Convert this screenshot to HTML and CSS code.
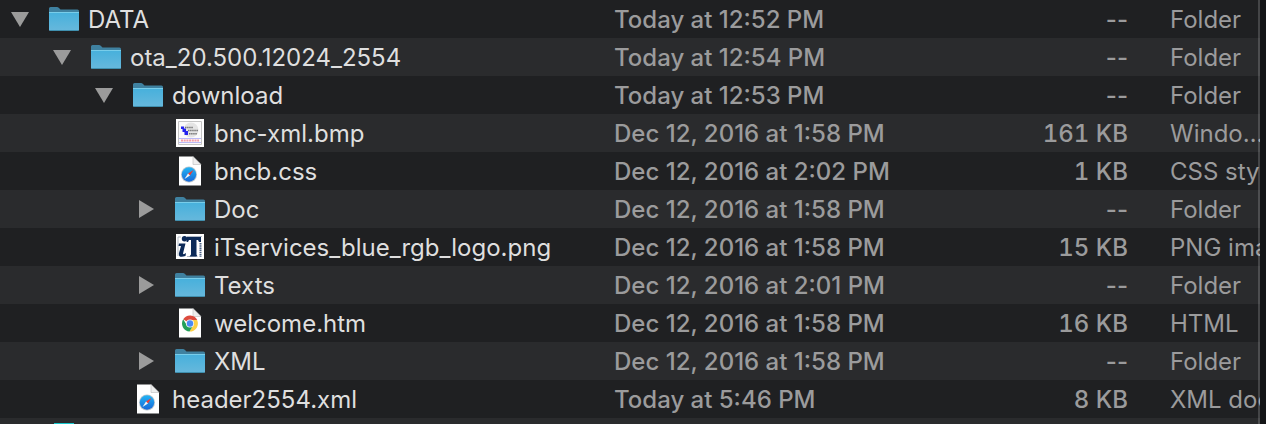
FILE: index.html
```
<!DOCTYPE html>
<html lang="en">
<head>
<meta charset="utf-8">
<title>Files</title>
<link rel="stylesheet" href="styles.css">
<script src="files.js" defer></script>
</head>
<body>
<svg class="defs" aria-hidden="true">
  <defs>
    <linearGradient id="blue" x1="0" y1="0" x2="0" y2="1"><stop offset="0" stop-color="#46b0dc"/><stop offset="1" stop-color="#67b8dc"/></linearGradient>
    <linearGradient id="compass" x1="0" y1="0" x2="0" y2="1"><stop offset="0" stop-color="#22b4f4"/><stop offset="1" stop-color="#1768d8"/></linearGradient>
    <symbol id="folder" viewBox="0 0 32 32">
      <path d="M1 12V5.500Q1 4 2.500 4H9Q10 4 11 5L12.500 6.500H29.500Q31 6.500 31 8V13H1Z" fill="#3f81a0"/>
      <path d="M1 9H31V26.500Q31 28 29.500 28H2.500Q1 28 1 26.500Z" fill="url(#blue)"/>
      <path d="M1 9.500H31" stroke="#78cdea"/>
      <path d="M2 27.500H30" stroke="#3f8fae"/>
    </symbol>
    <symbol id="page" viewBox="0 0 32 32">
      <path d="M5 1.500H19L27 9.500V30.500H5Z" fill="#fff"/>
      <path d="M19 1.500V9.500H27Z" fill="#eee" stroke="#bbb" stroke-width=".6"/>
    </symbol>
    <symbol id="safari" viewBox="0 0 32 32">
      <use href="#page"/>
      <circle cx="15" cy="19.500" r="8" fill="#b9c3cc"/>
      <circle cx="15" cy="19.500" r="7.200" fill="url(#compass)"/>
      <path d="M19.500 15L16 20.500 14 18.500Z" fill="#f33a30"/>
      <path d="M10.500 24L14 18.500 16 20.500Z" fill="#f4f4f4"/>
    </symbol>
    <symbol id="chrome" viewBox="0 0 32 32">
      <use href="#page"/>
      <path d="M16 16.500L9.200 12.300A8 8 0 0 1 23.300 13H16Z" fill="#dd4b3e"/>
      <path d="M16 13H23.100A8 8 0 0 1 15.500 24.500L19 18Z" fill="#fdd045"/>
      <path d="M9.200 12.300L13 18.500 18.500 19.500 15.500 24.500A8 8 0 0 1 9.200 12.300Z" fill="#23a05a"/>
      <circle cx="16" cy="16.500" r="4" fill="#f5f5f5"/>
      <circle cx="16" cy="16.500" r="3.200" fill="#4a8af4"/>
    </symbol>
    <symbol id="bnc" viewBox="0 0 32 32">
      <path d="M2 2H30V30H2Z" fill="#fff"/>
      <path d="M4.500 4.500H27.500V27.500H4.500Z" fill="#fafafa" stroke="#c4c4c4"/>
      <circle cx="17" cy="13" r="7.500" fill="#e4e4e4"/>
      <path d="M7 9.500H10V11.500H12V14H14V18H10.500V15H8.500V12H7Z" fill="#2424ee"/>
      <path d="M11 10.500H19M14 13.500H24M15 16.800H23" stroke="#777" stroke-width="1.500" stroke-dasharray="1.500 .6"/>
      <path d="M5 21.500H27M5 25.500H27" stroke="#a8a8f4" stroke-width=".8"/>
      <path d="M7 23.500H25" stroke="#f39aa8" stroke-width="2" stroke-dasharray="2 .7"/>
    </symbol>
    <symbol id="it" viewBox="0 0 32 32">
      <path d="M2 3H30V28H2Z" fill="#fff"/>
      <path d="M4 25V6H7M13 5.500H28M13 25.500H22" fill="none" stroke="#b3bbc6"/>
      <circle cx="10.500" cy="7.700" r="2.700" fill="#0c2a58"/>
      <path d="M5 12.500H11.500L9 22.500Q9.500 24 12 22L11.500 25Q4 27.500 5 22L7 15H4.500Z" fill="#0c2a58"/>
      <path d="M13 6H27V11H25L24 9H22.500V23.500L23.500 25.500H15.500L17 23.500V9H15L14 11H12.500Z" fill="#0c2a58"/>
      <path d="M26.500 12V26" stroke="#4a6286" stroke-width="2" stroke-dasharray="1.500 .7"/>
    </symbol>
  </defs>
</svg>
<main class="finder">
  <table class="files">
    <colgroup><col class="col-name"><col class="col-date"><col class="col-size"><col class="col-kind"></colgroup>
    <tbody id="rows"></tbody>
  </table>
  <div class="next-row"><span class="next-icon"></span></div>
</main>
</body>
</html>
```
FILE: files.js
```
const files = [
  [0, "open", "folder", "DATA", "Today at 12:52 PM", "--", "Folder"],
  [1, "open", "folder", "ota_20.500.12024_2554", "Today at 12:54 PM", "--", "Folder"],
  [2, "open", "folder", "download", "Today at 12:53 PM", "--", "Folder"],
  [3, "", "bnc", "bnc-xml.bmp", "Dec 12, 2016 at 1:58 PM", "161 KB", "Windo…"],
  [3, "", "safari", "bncb.css", "Dec 12, 2016 at 2:02 PM", "1 KB", "CSS sty"],
  [3, "closed", "folder", "Doc", "Dec 12, 2016 at 1:58 PM", "--", "Folder"],
  [3, "", "it", "iTservices_blue_rgb_logo.png", "Dec 12, 2016 at 1:58 PM", "15 KB", "PNG ima"],
  [3, "closed", "folder", "Texts", "Dec 12, 2016 at 2:01 PM", "--", "Folder"],
  [3, "", "chrome", "welcome.htm", "Dec 12, 2016 at 1:58 PM", "16 KB", "HTML"],
  [3, "closed", "folder", "XML", "Dec 12, 2016 at 1:58 PM", "--", "Folder"],
  [2, "", "safari", "header2554.xml", "Today at 5:46 PM", "8 KB", "XML doc"]
];

document.getElementById("rows").innerHTML = files.map(([depth, state, icon, name, date, size, kind]) => {
  const toggle = state
    ? `<button class="toggle ${state}" aria-label="Toggle ${name}" aria-expanded="${state === "open"}"><svg viewBox="0 0 18 18"><path d="${state === "open" ? "M0 2H18L9 17Z" : "M2 0V18L17 9Z"}"/></svg></button>`
    : `<span class="toggle"></span>`;
  const sizeClass = size === "--" ? "size" : "size digits";
  return `<tr><td><div class="name depth-${depth}">${toggle}<svg class="icon"><use href="#${icon}"/></svg><span class="label">${name}</span></div></td><td class="text">${date}</td><td class="text ${sizeClass}">${size}</td><td class="text kind">${kind}</td></tr>`;
}).join("");
```
FILE: styles.css
```
* { box-sizing: border-box; }
body { margin: 0; background: #141517; }
.defs { position: absolute; width: 0; height: 0; }
.finder {
  position: relative;
  margin-right: 6px;
  background: #2a2b2d;
  overflow: hidden;
  color: #9b9b9c;
  font: 450 24px/36px Inter, "Liberation Sans", sans-serif;
}
.finder::after {
  content: "";
  position: absolute;
  inset: 0 0 0 auto;
  width: 2px;
  background: rgba(255, 255, 255, 0.17);
}
.files { width: 100%; table-layout: fixed; border-collapse: collapse; }
.col-name { width: 614px; }
.col-date { width: 366px; }
.col-size { width: 148px; }
.files tr { background: #1f2022; }
.files tr:nth-child(even) { background: #2a2b2d; }
.files td { height: 38px; padding: 0; white-space: nowrap; overflow: hidden; }
.files .text { padding-top: 2px; }
.files .size { text-align: right; }
.digits { font-variant-numeric: tabular-nums; }
.files .kind { padding-left: 42px; font-weight: 400; }
.name { display: flex; align-items: center; height: 38px; color: #dfdfdf; font-weight: 400; }
.label { padding-top: 2px; }
.depth-0 { padding-left: 11px; }
.depth-1 { padding-left: 53px; }
.depth-2 { padding-left: 95px; }
.depth-3 { padding-left: 137px; }
.toggle { width: 18px; height: 18px; margin-right: 19px; padding: 0; border: 0; background: none; flex: none; }
.toggle svg { display: block; width: 18px; height: 18px; fill: #9b9b9b; }
.icon { width: 32px; height: 32px; margin-right: 8px; flex: none; }
.next-row { height: 6px; padding: 5px 0 0 54px; }
.next-icon { display: block; width: 20px; height: 1px; background: #17c8ce; }
```
